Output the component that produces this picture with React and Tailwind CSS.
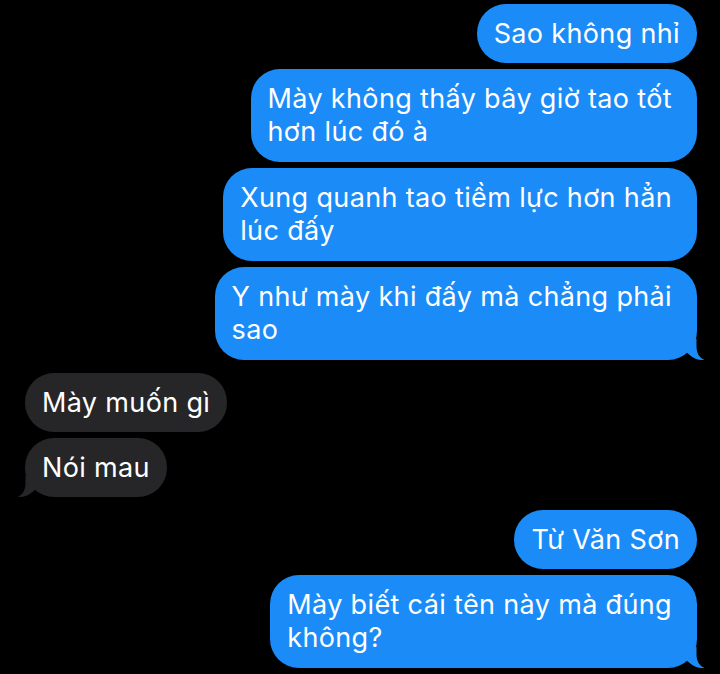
const messages = [
  { from: 'me', lines: ['Sao không nhỉ'] },
  { from: 'me', lines: ['Mày không thấy bây giờ tao tốt', 'hơn lúc đó à'] },
  { from: 'me', lines: ['Xung quanh tao tiềm lực hơn hẳn', 'lúc đấy'] },
  { from: 'me', lines: ['Y như mày khi đấy mà chẳng phải', 'sao'], tail: true },
  { from: 'them', lines: ['Mày muốn gì'], gap: true },
  { from: 'them', lines: ['Nói mau'], tail: true },
  { from: 'me', lines: ['Từ Văn Sơn'], gap: true },
  { from: 'me', lines: ['Mày biết cái tên này mà đúng', 'không?'], tail: true },
];

const Tail = ({ color, side }) => (
  <svg
    width="21"
    height="22"
    viewBox="0 0 21 22"
    className={
      side === 'right'
        ? 'absolute bottom-[-1px] right-[-8px]'
        : 'absolute bottom-[-1px] left-[-8px] -scale-x-100'
    }
  >
    <path
      d="M0 0 H12.5 V7 C12.5 14 15 18.5 20.5 21 C15 21.6 10 20 5 15.5 L0 11 Z"
      fill={color}
    />
  </svg>
);

const Bubble = ({ msg }) => {
  const mine = msg.from === 'me';
  const multi = msg.lines.length > 1;
  return (
    <div className={`flex ${mine ? 'justify-end' : 'justify-start'} ${msg.gap ? 'mt-[13px]' : 'mt-[6px]'}`}>
      <div
        className={`relative rounded-[29px] pt-[13px] pl-[17px] ${multi ? 'pr-[25px] pb-[14px]' : 'pr-[17px] pb-[13px]'} ${
          mine ? 'bg-[#1b8bf8]' : 'bg-[#262628]'
        }`}
      >
        <p className="text-white text-[27px] leading-[33px] tracking-[0.35px] whitespace-nowrap">
          {msg.lines.map((line, i) => (
            <span key={i} className="block">
              {line}
            </span>
          ))}
        </p>
        {msg.tail && <Tail side={mine ? 'right' : 'left'} color={mine ? '#1b8bf8' : '#262628'} />}
      </div>
    </div>
  );
};

const App = () => {
  return (
    <div
      className="w-[720px] h-[674px] overflow-hidden bg-black pl-[25px] pr-[23px]"
      style={{ fontFamily: 'Inter, "Noto Sans", sans-serif' }}
    >
      <div className="-mt-[2px]">
        {messages.map((msg, i) => (
          <Bubble key={i} msg={msg} />
        ))}
      </div>
    </div>
  );
};

export default App;
